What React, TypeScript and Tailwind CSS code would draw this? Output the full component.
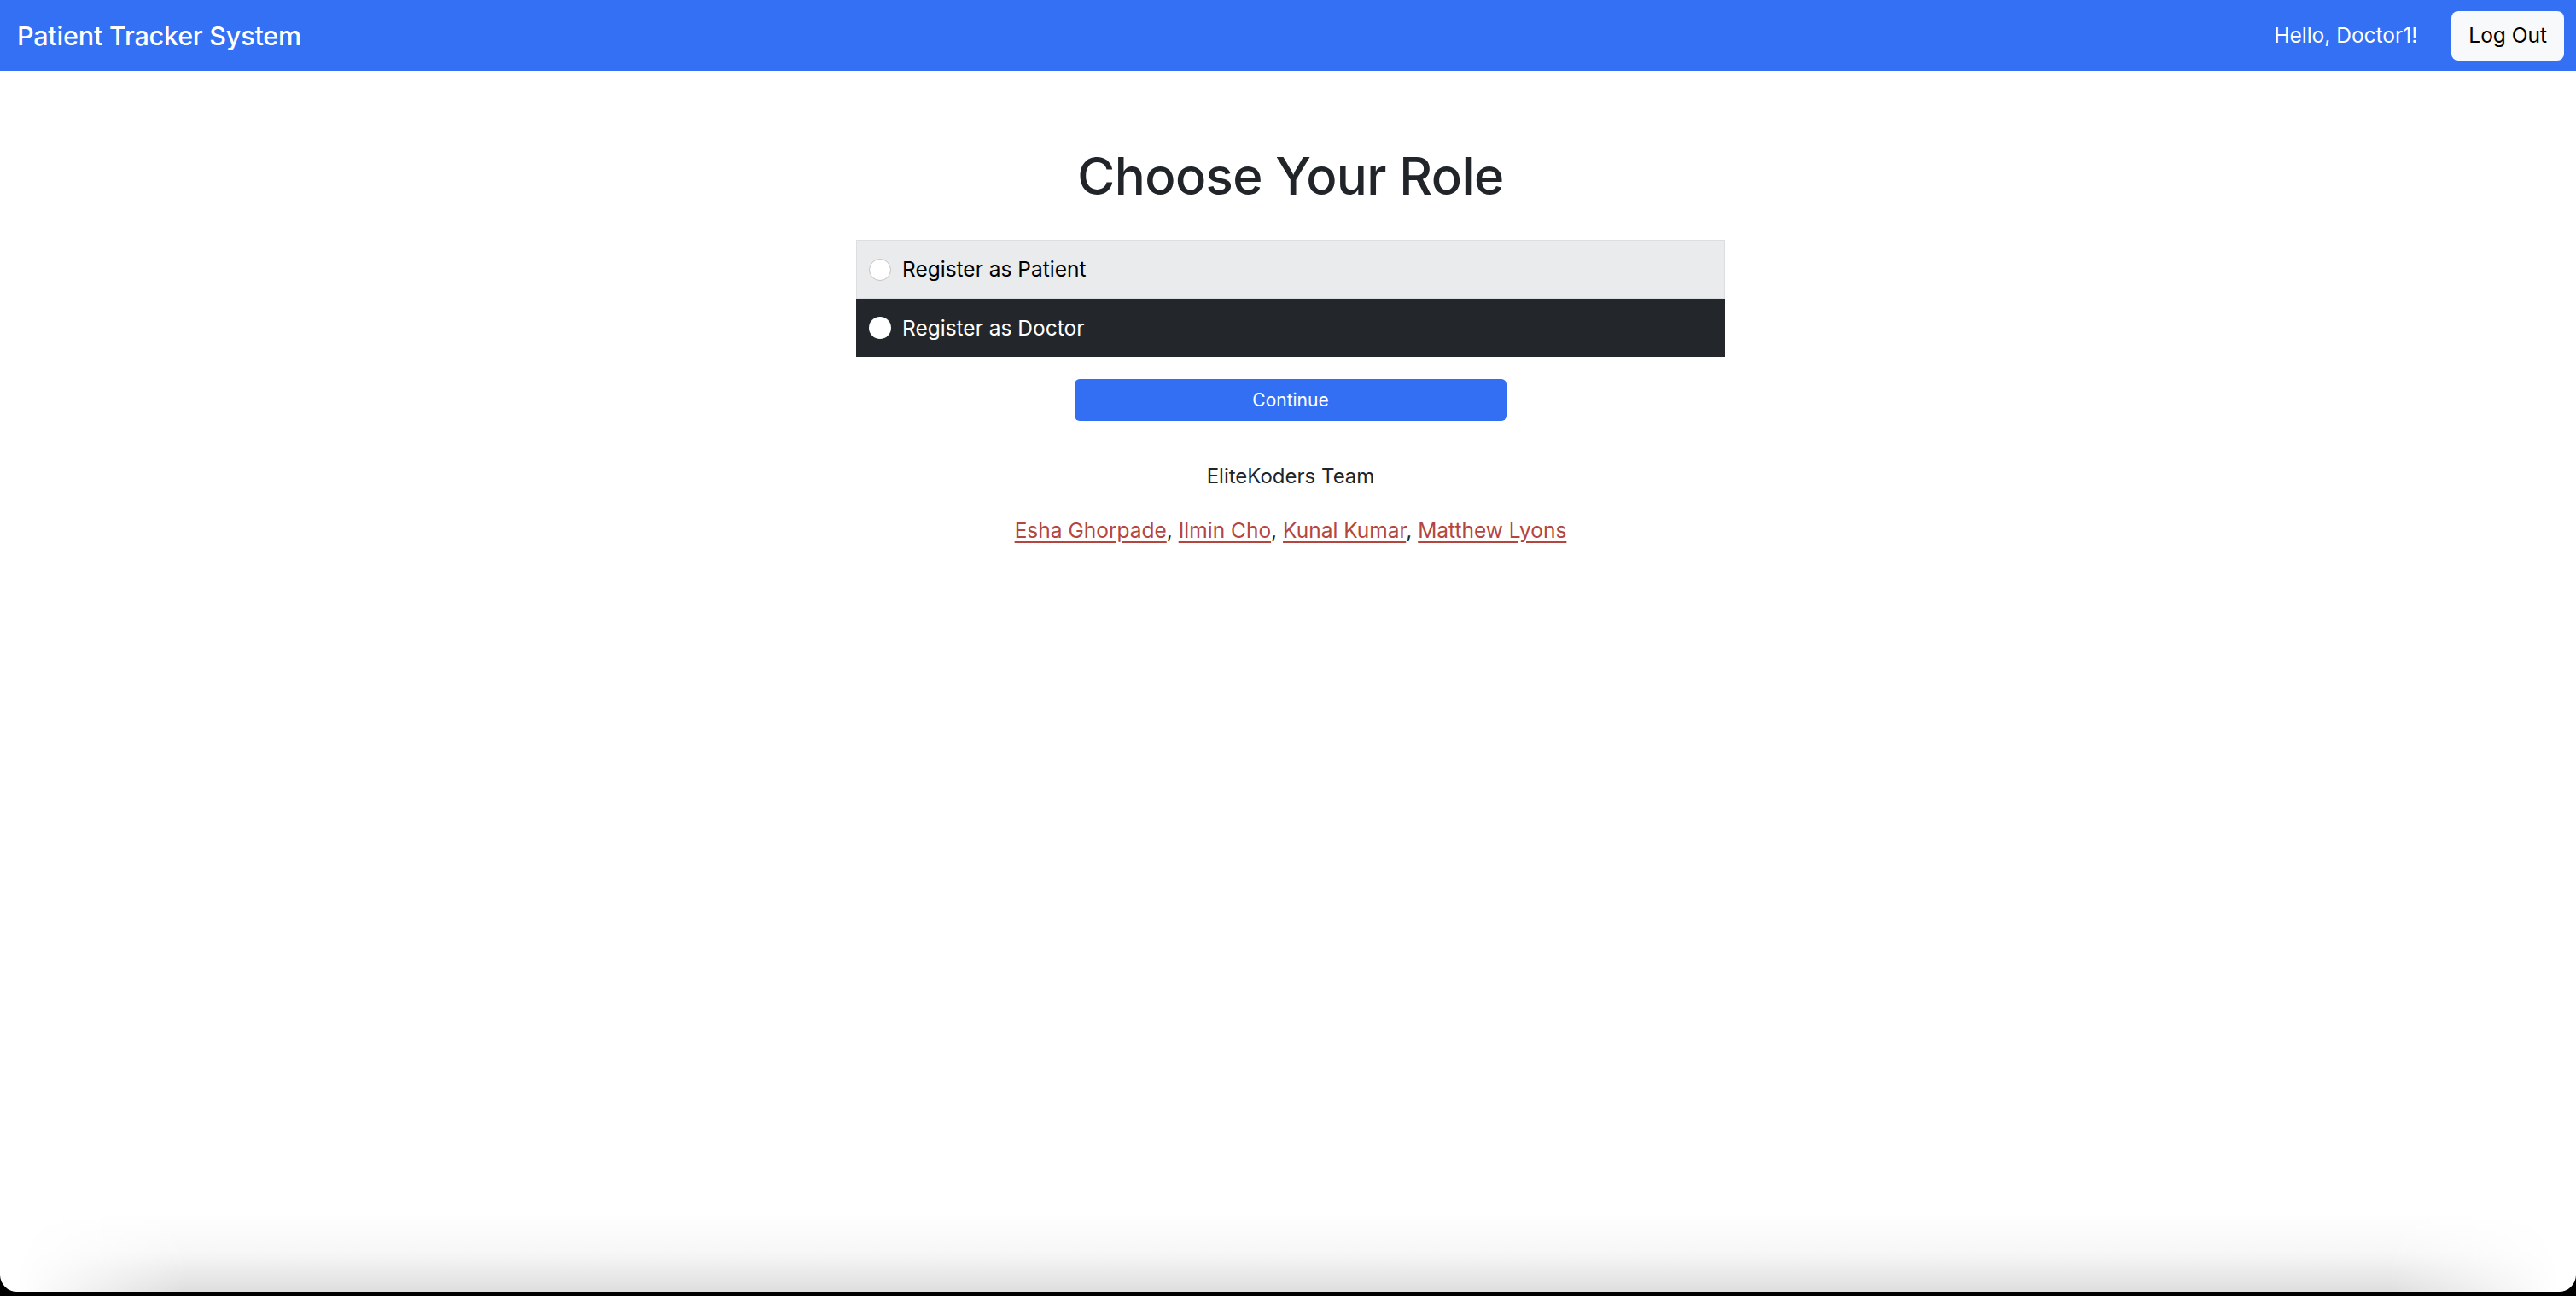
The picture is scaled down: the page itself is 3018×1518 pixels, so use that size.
import { useState } from "react";

const team = ["Esha Ghorpade", "Ilmin Cho", "Kunal Kumar", "Matthew Lyons"];

const roles = [
  { id: "patient", label: "Register as Patient" },
  { id: "doctor", label: "Register as Doctor" },
];

const App = () => {
  const [role, setRole] = useState("doctor");

  return (
    <div className="h-[1518px] flex flex-col bg-black font-[Inter,'Liberation_Sans',sans-serif]">
      <div className="flex-1 flex flex-col bg-white rounded-b-[20px] overflow-hidden">
        <nav className="h-[83px] bg-[#3370f4] flex items-center justify-between pl-[20px] pr-[14px] shrink-0">
          <span className="text-white text-[30.5px] font-medium tracking-[-0.2px]">Patient Tracker System</span>
          <div className="flex items-center gap-[40px]">
            <span className="text-white text-[24.5px]">Hello, Doctor1!</span>
            <button className="h-[58px] px-[20px] rounded-[8px] bg-[#f8f9fa] text-black text-[24.5px]">
              Log Out
            </button>
          </div>
        </nav>

        <main className="flex flex-col items-center pt-[87px] pl-[6px] text-[#212529]">
          <h1 className="text-[60px] leading-[1.2] font-medium tracking-[-0.6px]">Choose Your Role</h1>

          <div className="w-[1018px] mt-[39px] flex flex-col">
            {roles.map((r) => {
              const dark = r.id === "doctor";
              return (
                <label
                  key={r.id}
                  onClick={() => setRole(r.id)}
                  className={
                    dark
                      ? "h-[68px] flex items-center pl-[14px] bg-[#23262a] border border-[#23262a] text-white cursor-pointer"
                      : "h-[69px] flex items-center pl-[14px] bg-[#eaebed] border border-[#dcdee1] text-black cursor-pointer"
                  }
                >
                  <span
                    className={
                      dark
                        ? "w-[26px] h-[26px] rounded-full bg-white"
                        : "w-[26px] h-[26px] rounded-full bg-white border border-[#c4c4c4]"
                    }
                  />
                  <span className="ml-[13px] text-[24.5px]">{r.label}</span>
                  <input type="radio" name="role" className="hidden" checked={role === r.id} readOnly />
                </label>
              );
            })}
          </div>

          <button className="mt-[26px] w-[506px] h-[49px] rounded-[6px] bg-[#336ff3] text-white text-[21px]">
            Continue
          </button>

          <p className="mt-[47px] text-[24px] leading-[1.5]">EliteKoders Team</p>
          <p className="mt-[27px] text-[24.5px] leading-[1.5]">
            {team.map((name, i) => (
              <span key={name}>
                <a href="#" className="text-[#b5463f] underline underline-offset-[4px]">
                  {name}
                </a>
                {i < team.length - 1 && ", "}
              </span>
            ))}
          </p>
        </main>

        <div className="mt-auto h-[92px] shrink-0 bg-linear-to-b from-white via-[#f7f7f7] to-[#dedede] [mask-image:linear-gradient(to_right,transparent_20px,black_220px,black_calc(100%-220px),transparent_calc(100%-20px))]" />
      </div>
      <div className="h-[5px] shrink-0" />
    </div>
  );
};

export default App;
